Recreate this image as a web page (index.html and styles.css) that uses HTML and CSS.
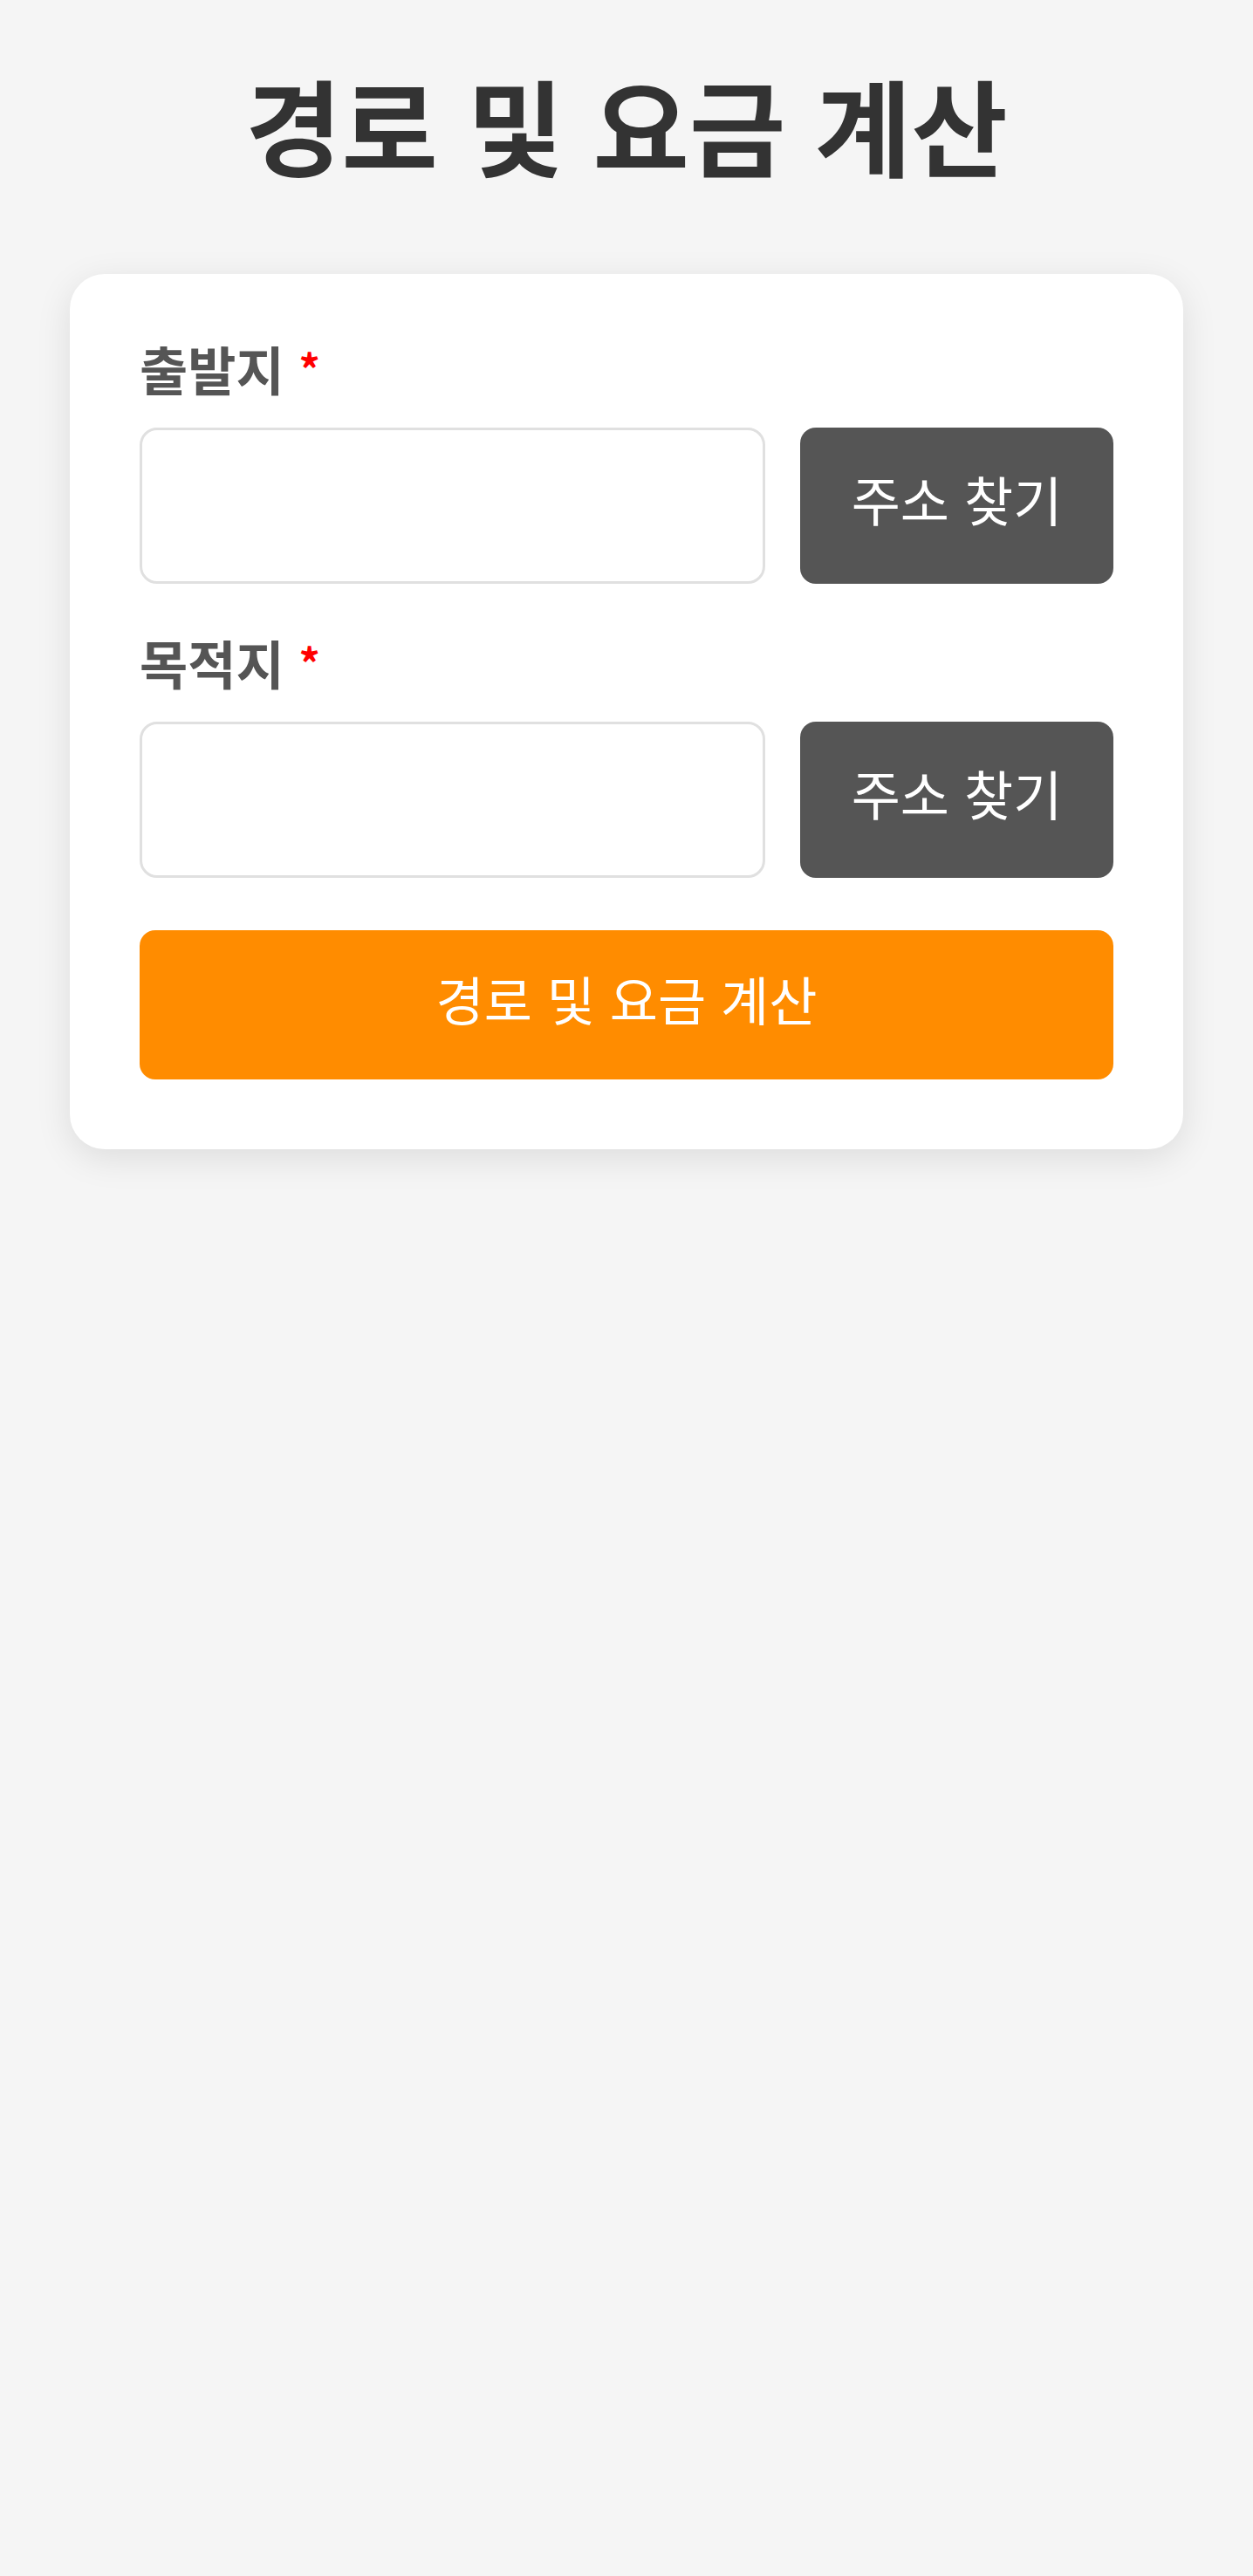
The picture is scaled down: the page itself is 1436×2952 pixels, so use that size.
FILE: index.html
```html
<!DOCTYPE html>
<html lang="ko">
<head>
<meta charset="UTF-8">
<meta name="viewport" content="width=device-width, initial-scale=1.0">
<title>경로 및 요금 계산</title>
<link rel="stylesheet" href="styles.css">
</head>
<body>
<div class="page">
    <h1 class="title">경로 및 요금 계산</h1>

    <div class="card">
        <div class="field">
            <label class="field-label" for="start">출발지 <span class="required">*</span></label>
            <div class="field-row">
                <input type="text" id="start" class="field-input">
                <button class="search-btn" type="button">주소 찾기</button>
            </div>
        </div>

        <div class="field">
            <label class="field-label" for="end">목적지 <span class="required">*</span></label>
            <div class="field-row">
                <input type="text" id="end" class="field-input">
                <button class="search-btn" type="button">주소 찾기</button>
            </div>
        </div>

        <button class="calc-btn" type="button">경로 및 요금 계산</button>
    </div>
</div>
</body>
</html>
```

FILE: styles.css
```css
body {
    margin: 0;
    background-color: #f5f5f5;
    font-family: "Noto Sans CJK KR", "Noto Sans", sans-serif;
    color: #333;
}

.page {
    padding: 70px 80px;
}

.title {
    margin: 0 0 100px;
    font-size: 120px;
    line-height: 1.2;
    font-weight: 700;
    text-align: center;
    color: #333;
}

.card {
    background-color: #fff;
    border-radius: 40px;
    padding: 72px 80px 80px;
    box-shadow: 0 10px 40px rgba(0, 0, 0, 0.1);
}

.field {
    margin-bottom: 54px;
}

.field-label {
    display: block;
    font-size: 60px;
    line-height: 1.2;
    font-weight: 700;
    color: #555;
    margin-bottom: 32px;
}

.required {
    color: #ff0000;
    font-size: 48px;
    vertical-align: 6px;
}

.field-row {
    display: flex;
    gap: 40px;
}

.field-input {
    flex: 1;
    min-width: 0;
    height: 179px;
    box-sizing: border-box;
    border: 3.5px solid #e0e0e0;
    border-radius: 20px;
    background-color: #fff;
    font-size: 56px;
    padding: 0 30px;
    outline: none;
}

.search-btn {
    width: 359px;
    height: 179px;
    padding: 0 0 16px;
    border: none;
    border-radius: 18px;
    background-color: #555;
    color: #fff;
    font-family: inherit;
    font-size: 61px;
    cursor: pointer;
}

.calc-btn {
    display: block;
    width: 100%;
    height: 171px;
    margin-top: 60px;
    padding: 0 0 16px;
    border: none;
    border-radius: 18px;
    background-color: #ff8c00;
    color: #fff;
    font-family: inherit;
    font-size: 60px;
    cursor: pointer;
}
```
